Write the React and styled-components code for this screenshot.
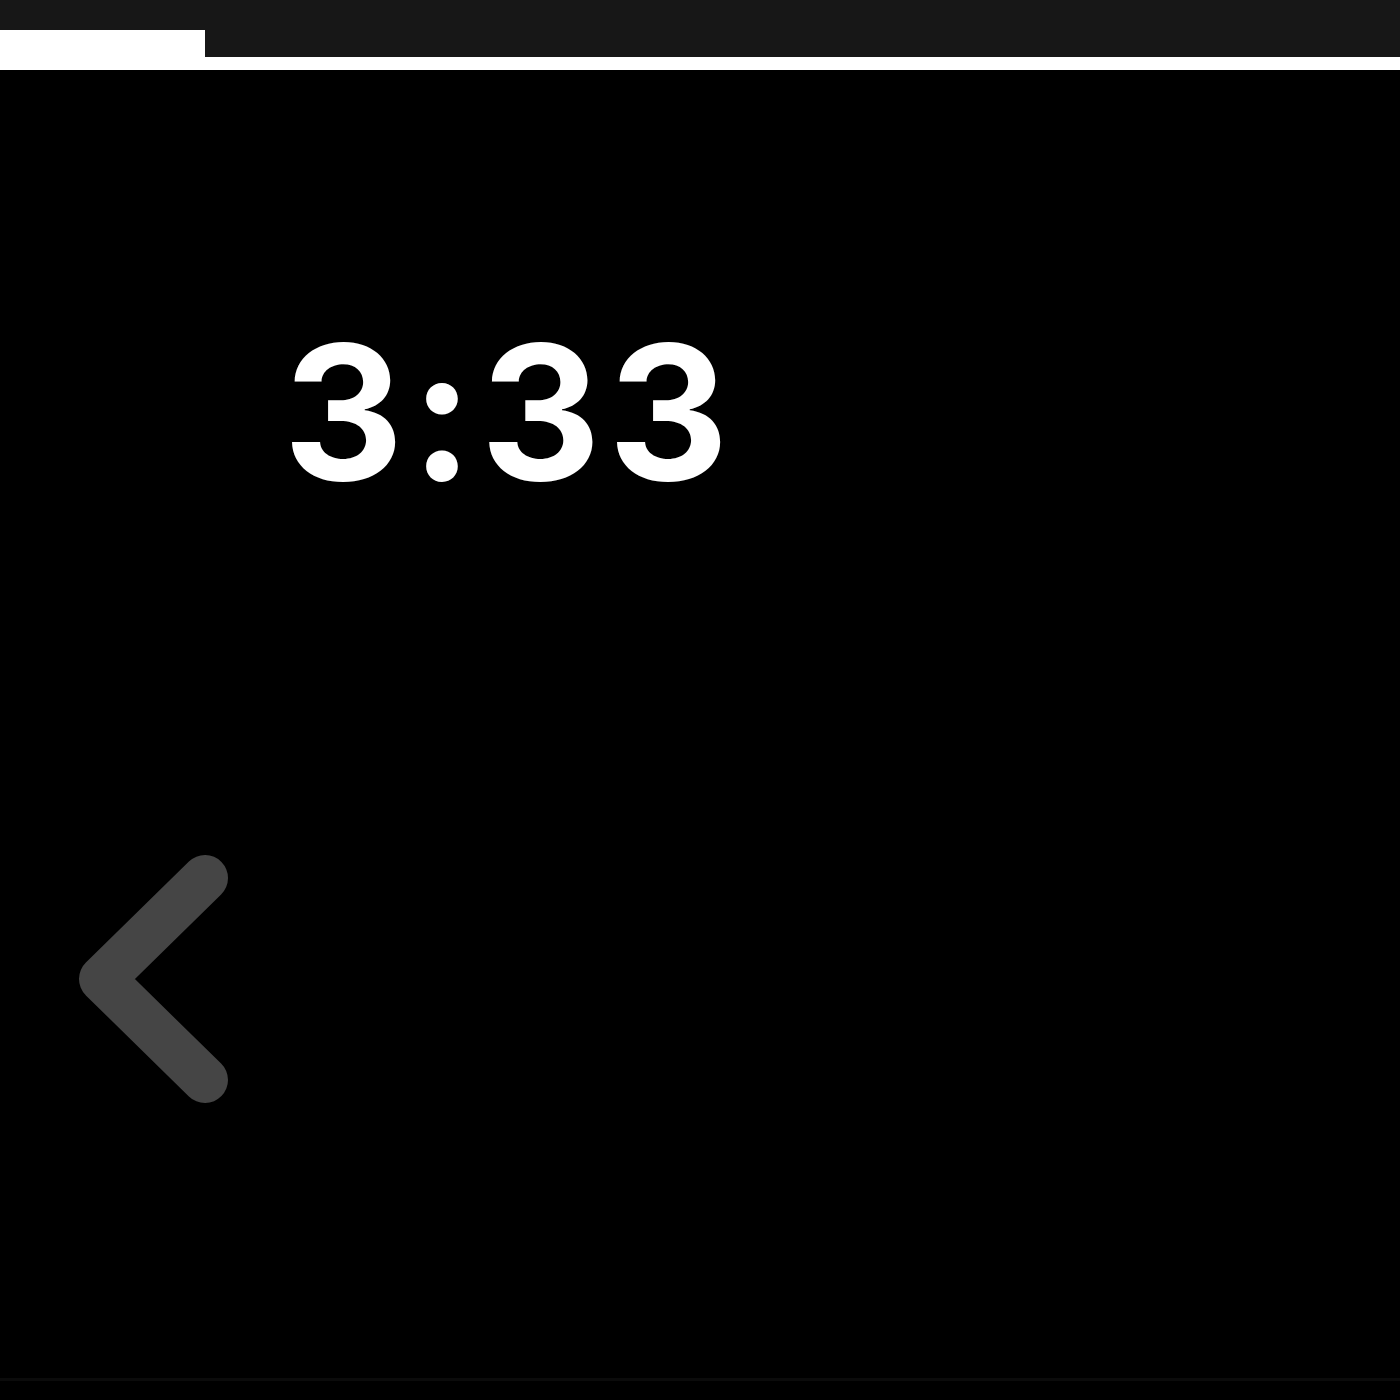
import React from "react";
import styled, { createGlobalStyle } from "styled-components";

const Global = createGlobalStyle`
  html, body { margin: 0; padding: 0; background: #000; }
  body { font-family: Inter, "Liberation Sans", sans-serif; }
`;

const Page = styled.div`
  width: 1400px;
  height: 1400px;
  background: #000;
  display: flex;
  flex-direction: column;
  overflow: hidden;
`;

const TopBar = styled.div`
  height: 57px;
  background: #171717;
  display: flex;
  align-items: flex-end;
`;

const Tab = styled.div`
  width: 205px;
  height: 27px;
  background: #fff;
`;

const Rule = styled.div`
  height: 13px;
  background: #fff;
`;

const Main = styled.main`
  height: 1308px;
  border-bottom: 3px solid #0b0b0b;
  display: flex;
  flex-direction: column;
  align-items: flex-start;
`;

const Time = styled.div`
  margin-top: 249px;
  margin-left: 283px;
  font-size: 187px;
  line-height: 1;
  font-weight: 700;
  color: #fff;
  letter-spacing: 7px;
`;

const BackButton = styled.button`
  margin-top: 324px;
  margin-left: 55px;
  padding: 0;
  border: 0;
  background: transparent;
  width: 200px;
  height: 300px;
  display: block;
  cursor: pointer;
`;

export default function App() {
  return (
    <>
      <Global />
      <Page>
        <TopBar>
          <Tab />
        </TopBar>
        <Rule />
        <Main>
          <Time>3:33</Time>
          <BackButton aria-label="Back">
            <svg width="200" height="300" viewBox="0 0 200 300">
              <path
                d="M150 48 L47 149 L150 250"
                fill="none"
                stroke="#454545"
                strokeWidth="46"
                strokeLinecap="round"
                strokeLinejoin="round"
              />
            </svg>
          </BackButton>
        </Main>
      </Page>
    </>
  );
}
